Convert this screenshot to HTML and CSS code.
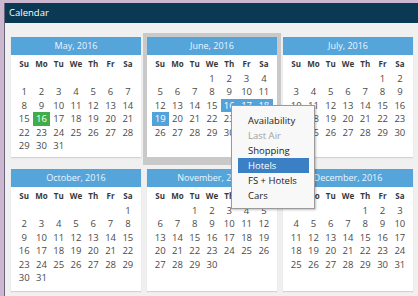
FILE: index.html
```html
<!DOCTYPE html>
<html lang="en">

<head>
    <meta charset="UTF-8" />
    <title>Calendar</title>
    <link rel="stylesheet" href="styles.css">
</head>

<body>
    <div class="window">
        <div class="titlebar">Calendar</div>

        <div class="months" id="months">
            <!-- month cards are built below -->
        </div>

        <div class="context-menu">
            <div class="menu-item">Availability</div>
            <div class="menu-item disabled">Last Air</div>
            <div class="menu-item">Shopping</div>
            <div class="menu-item hover">Hotels</div>
            <div class="menu-item">FS + Hotels</div>
            <div class="menu-item">Cars</div>
        </div>
    </div>

    <script>
        const monthNames = ['January', 'February', 'March', 'April', 'May', 'June', 'July',
            'August', 'September', 'October', 'November', 'December'];
        const dayNames = ['Su', 'Mo', 'Tu', 'We', 'Th', 'Fr', 'Sa'];

        const shown = [4, 5, 6, 9, 10, 11];

        // special days: today, the picked day and the range before it
        function dayClass(month, day) {
            if (month === 4 && day === 16) return 'today';
            if (month === 5 && day === 19) return 'picked';
            if (month === 5 && day >= 16 && day <= 18) return 'range';
            return '';
        }

        const container = document.getElementById('months');

        shown.forEach(month => {
            const card = document.createElement('div');
            card.className = 'card' + (month === 5 ? ' active' : '');

            let html = `<div class="card-head">${monthNames[month]}, 2016</div><div class="days">`;
            dayNames.forEach(d => {
                html += `<div class="dow">${d}</div>`;
            });

            let offset = new Date(2016, month, 1).getDay();
            if (offset === 0) offset = 7; // a month starting on Sunday keeps an empty first week
            const count = new Date(2016, month + 1, 0).getDate();

            for (let i = 0; i < 42; i++) {
                const day = i - offset + 1;
                if (day < 1 || day > count) {
                    html += '<div class="date"></div>';
                } else {
                    html += `<div class="date ${dayClass(month, day)}">${day}</div>`;
                }
            }

            html += '</div>';
            card.innerHTML = html;
            container.appendChild(card);
        });
    </script>
</body>

</html>
```

FILE: styles.css
```css
body {
    margin: 0;
    width: 418px;
    height: 296px;
    overflow: hidden;
    background-color: #cbb8d0;
    font-family: 'Open Sans', 'Liberation Sans', sans-serif;
}

.window {
    position: relative;
    margin: 3px 0 0 4px;
    height: 293px;
    border-left: 1px solid #6a6478;
    background-color: #f0f0f0;
}

.titlebar {
    height: 20px;
    padding-left: 4px;
    background-color: #0b3954;
    color: #ffffff;
    font-size: 9.5px;
    line-height: 20px;
}

.months {
    display: grid;
    grid-template-columns: repeat(3, 130px);
    grid-template-rows: 120px 122px;
    column-gap: 6px;
    row-gap: 12px;
    padding: 14px 0 0 6px;
}

.card {
    background-color: #ffffff;
    box-shadow: 0 1px 1px rgba(0, 0, 0, 0.12);
}

.card.active {
    box-shadow: 0 0 0 4px #c9c9c9, 0 4px 0 4px #c9c9c9;
}

.card-head {
    height: 18px;
    background-color: #55a4da;
    color: #eef6fc;
    text-align: center;
    font-size: 9px;
    line-height: 18px;
}

.days {
    display: grid;
    grid-template-columns: repeat(7, 1fr);
    padding: 2px 4.5px 0;
}

.dow {
    height: 15px;
    line-height: 14px;
    text-align: center;
    font-size: 8px;
    font-weight: bold;
    color: #383838;
}

.date {
    height: 13.4px;
    line-height: 13.4px;
    text-align: center;
    font-size: 9.5px;
    color: #4a4a4a;
}

.date.today {
    background-color: #3fae4a;
    color: #ffffff;
}

.date.picked,
.date.range {
    background-color: #53a2da;
    color: #ffffff;
}

.context-menu {
    position: absolute;
    left: 226px;
    top: 102px;
    width: 71px;
    padding: 7px 5px 5px 6px;
    border: 1px solid #9a9a9a;
    background-color: #f8f8f8;
    box-shadow: 1px 1px 2px rgba(0, 0, 0, 0.25);
}

.menu-item {
    height: 15px;
    line-height: 15px;
    padding-left: 10px;
    font-size: 9.5px;
    color: #222222;
}

.menu-item.disabled {
    color: #a0a0a0;
}

.menu-item.hover {
    background-color: #3b7fc4;
    color: #ffffff;
}
```
